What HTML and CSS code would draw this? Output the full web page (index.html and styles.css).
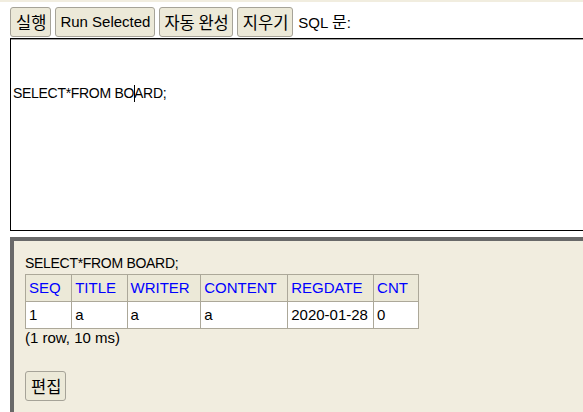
FILE: index.html
```html
<!DOCTYPE html>
<html lang="ko">
<head>
<meta charset="utf-8">
<title>H2 Console</title>
<link rel="stylesheet" href="styles.css">
</head>
<body>
<div class="topstrip"></div>
<div class="toolbar">
  <button class="btn ko">실행</button>
  <button class="btn">Run Selected</button>
  <button class="btn ko tight">자동 완성</button>
  <button class="btn ko">지우기</button>
  <span class="label">SQL <span class="ko">문</span>:</span>
</div>
<div class="editor">

SELECT*FROM BO<span class="caret"></span>ARD;</div>
<div class="result">
  <div class="sql">SELECT*FROM BOARD;</div>
  <table class="resultset">
    <tr>
      <th><a href="#">SEQ</a></th>
      <th><a href="#">TITLE</a></th>
      <th><a href="#">WRITER</a></th>
      <th><a href="#">CONTENT</a></th>
      <th><a href="#">REGDATE</a></th>
      <th><a href="#">CNT</a></th>
    </tr>
    <tr>
      <td>1</td>
      <td>a</td>
      <td>a</td>
      <td>a</td>
      <td>2020-01-28</td>
      <td>0</td>
    </tr>
  </table>
  <div class="info">(1 row, 10 ms)</div>
  <button class="btn ko edit">편집</button>
</div>
</body>
</html>
```
FILE: styles.css
```css
html, body {
  margin: 0;
  padding: 0;
  overflow: hidden;
  background: #fff;
}
body {
  font-family: "Liberation Sans", "Noto Sans CJK KR", sans-serif;
  font-size: 15px;
  color: #000;
  width: 583px;
  height: 412px;
}
.topstrip {
  height: 2px;
  background: #f1eddf;
}
.toolbar {
  display: flex;
  align-items: center;
  gap: 4px;
  padding: 5px 0 0 10px;
  height: 30px;
}
.btn {
  font-family: "Liberation Sans", "Noto Sans CJK KR", sans-serif;
  font-size: 15px;
  color: #000;
  height: 30px;
  padding: 0 4px;
  margin: 0;
  background: #ece9d8;
  border: 1px solid #a6a398;
  border-radius: 3px;
  line-height: 28px;
}
.ko {
  font-family: "Noto Sans CJK KR", sans-serif;
  font-size: 16.5px;
}
.btn.ko {
  padding: 0 4px 0 5px;
}
.btn.tight {
  padding: 0 3px 0 4px;
  word-spacing: -1px;
}
.label {
  margin-left: 1px;
  line-height: 30px;
}
.label .ko {
  font-size: 16px;
}
.editor {
  box-sizing: border-box;
  margin: 1px 0 0 10px;
  width: 700px;
  height: 193px;
  border: 1px solid #000;
  box-shadow: inset 0 1px 0 #a0a0a0;
  padding: 4px 2px 2px 2px;
  white-space: pre;
  font-size: 14px;
  line-height: 20px;
  letter-spacing: -0.3px;
  background: #fff;
}
.caret {
  display: inline-block;
  width: 1px;
  height: 17px;
  margin-right: -1px;
  background: #000;
  vertical-align: -4px;
}
.result {
  margin: 6px 0 0 10px;
  width: 700px;
  height: 300px;
  border-top: 4px solid #696969;
  border-left: 4px solid #696969;
  background: #f1eddf;
  padding: 13px 0 0 11px;
}
.sql {
  font-size: 14px;
  line-height: 18px;
  letter-spacing: -0.3px;
  margin-bottom: 2px;
}
.resultset {
  border-collapse: collapse;
  border: 1px solid #aca899;
}
.resultset th,
.resultset td {
  border: 1px solid #aca899;
  padding: 4px 3px;
  line-height: 18px;
  text-align: left;
  font-weight: normal;
  font-size: 15px;
}
.resultset th {
  background: #ece9d8;
  padding-right: 10.5px;
}
.resultset td {
  background: #fff;
}
.resultset th a {
  color: #0000ff;
  text-decoration: none;
}
.info {
  line-height: 18px;
}
.edit {
  display: block;
  margin-top: 24px;
}
```
